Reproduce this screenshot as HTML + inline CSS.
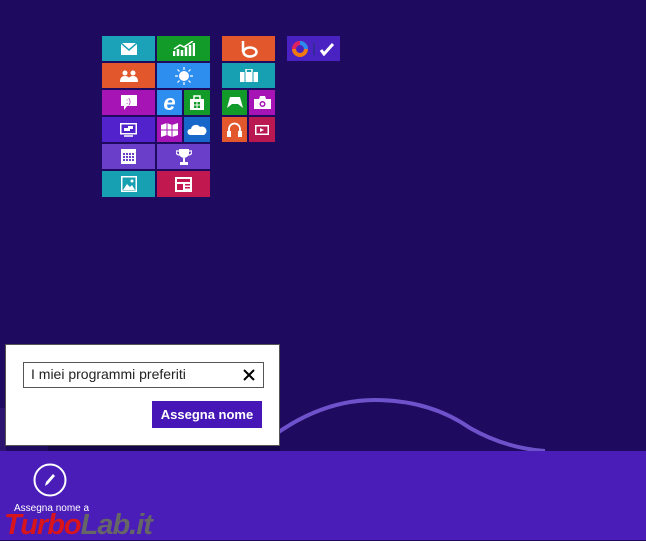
<!DOCTYPE html>
<html><head><meta charset="utf-8">
<style>
*{margin:0;padding:0;box-sizing:border-box}
body{width:646px;height:540px;overflow:hidden;background:#1e0a5e;font-family:"Liberation Sans",sans-serif;position:relative}
.t{position:absolute;display:flex;align-items:center;justify-content:center;color:#fff}
.t svg{display:block}
</style></head><body>
<!-- tiles -->
<div class="t" style="left:102px;top:36px;width:53px;height:25px;background:#1ba1b8"><svg width="16" height="12"><rect x="0" y="0" width="16" height="12" fill="#fff"/><path d="M0 0L8 7L16 0" stroke="#1ba1b8" stroke-width="1.5" fill="none"/></svg></div>
<div class="t" style="left:157px;top:36px;width:53px;height:25px;background:#139b2a"><svg width="22" height="16"><path d="M1 15V10M5 15V8M9 15V9M13 15V6M17 15V4M21 15V2" stroke="#fff" stroke-width="2.5"/><path d="M1 8L7 4L11 6L20 0" stroke="#fff" stroke-width="1.5" fill="none"/></svg></div>
<div class="t" style="left:222px;top:36px;width:53px;height:25px;background:#e2582c"><svg width="20" height="18"><path d="M4 1V12" stroke="#fff" stroke-width="2.5"/><ellipse cx="11" cy="12" rx="6.5" ry="4.5" stroke="#fff" stroke-width="2.5" fill="none"/></svg></div>
<div class="t" style="left:287px;top:36px;width:53px;height:25px;background:#4a22c2;gap:5px"><svg width="16" height="16"><circle cx="8" cy="8" r="6" stroke="#f07a10" stroke-width="4" fill="none"/><path d="M8 2A6 6 0 0 1 14 8" stroke="#2a8af0" stroke-width="4" fill="none"/><path d="M2 8A6 6 0 0 1 8 2" stroke="#e02060" stroke-width="4" fill="none"/></svg><svg width="22" height="14"><path d="M1 1V13" stroke="#203070" stroke-width="1"/><path d="M8 8L11 12L20 2" stroke="#fff" stroke-width="3" fill="none"/></svg></div>

<div class="t" style="left:102px;top:63px;width:53px;height:25px;background:#e2582c"><svg width="18" height="12"><circle cx="5" cy="3" r="2.5" fill="#fff"/><circle cx="13" cy="3" r="2.5" fill="#fff"/><path d="M0 12Q0 6 5 6Q10 6 10 12ZM8 12Q8 6 13 6Q18 6 18 12Z" fill="#fff"/></svg></div>
<div class="t" style="left:157px;top:63px;width:53px;height:25px;background:#2e8ef0"><svg width="18" height="18"><circle cx="9" cy="9" r="5" fill="#fff"/><g stroke="#fff" stroke-width="1.2"><path d="M9 0V3M9 15V18M0 9H3M15 9H18M2.5 2.5L4.5 4.5M13.5 13.5L15.5 15.5M2.5 15.5L4.5 13.5M13.5 4.5L15.5 2.5"/></g></svg></div>
<div class="t" style="left:222px;top:63px;width:53px;height:25px;background:#17a0b2"><svg width="18" height="13"><rect x="0" y="3" width="18" height="10" fill="#fff"/><rect x="6" y="0" width="6" height="4" stroke="#fff" stroke-width="1.5" fill="none"/><path d="M5 3V13M13 3V13" stroke="#17a0b2" stroke-width="1"/></svg></div>

<div class="t" style="left:102px;top:90px;width:53px;height:25px;background:#a614b5"><svg width="16" height="16"><path d="M0 0H16V11H6L3 15V11H0Z" fill="#fff"/><text x="5" y="9" font-size="8" fill="#a614b5" font-family="Liberation Sans">:)</text></svg></div>
<div class="t" style="left:157px;top:90px;width:25px;height:25px;background:#2e8ef0;font-size:22px;font-style:italic;font-weight:bold">e</div>
<div class="t" style="left:184px;top:90px;width:26px;height:25px;background:#139b2a"><svg width="14" height="15"><path d="M0 4H14V15H0Z" fill="#fff"/><path d="M4 4V1H10V4" stroke="#fff" fill="none" stroke-width="1.5"/><rect x="4" y="7" width="2.5" height="2.5" fill="#139b2a"/><rect x="7.5" y="7" width="2.5" height="2.5" fill="#139b2a"/><rect x="4" y="10.5" width="2.5" height="2.5" fill="#139b2a"/><rect x="7.5" y="10.5" width="2.5" height="2.5" fill="#139b2a"/></svg></div>
<div class="t" style="left:222px;top:90px;width:25px;height:25px;background:#139b2a"><svg width="16" height="11"><path d="M3 0H13L16 11L11 7H5L0 11Z" fill="#fff"/></svg></div>
<div class="t" style="left:249px;top:90px;width:26px;height:25px;background:#a614b5"><svg width="17" height="13"><path d="M0 3H5L6 0H11L12 3H17V13H0Z" fill="#fff"/><circle cx="8.5" cy="8" r="3" fill="#a614b5"/><circle cx="8.5" cy="8" r="1.5" fill="#fff"/></svg></div>

<div class="t" style="left:102px;top:117px;width:53px;height:25px;background:#5222cc"><svg width="17" height="14"><rect x="0.75" y="0.75" width="15.5" height="10" stroke="#fff" stroke-width="1.5" fill="none"/><rect x="4" y="5" width="6" height="3" fill="#fff"/><rect x="8" y="3" width="5" height="3" fill="#fff"/><path d="M4 13H13" stroke="#fff" stroke-width="1.5"/></svg></div>
<div class="t" style="left:157px;top:117px;width:25px;height:25px;background:#a614b5"><svg width="17" height="14"><path d="M0 2L6 0L11 2L17 0V12L11 14L6 12L0 14Z" fill="#fff"/><path d="M0 7H17M6 0V12M11 2V14" stroke="#a614b5" stroke-width="1"/></svg></div>
<div class="t" style="left:184px;top:117px;width:26px;height:25px;background:#1766c9"><svg width="20" height="11"><path d="M3 11A3 3 0 0 1 4 5A5 5 0 0 1 13 3A4 4 0 0 1 17 11Z" fill="#fff"/></svg></div>
<div class="t" style="left:222px;top:117px;width:25px;height:25px;background:#e2582c"><svg width="15" height="15"><path d="M2 10V7A5.5 5.5 0 0 1 13 7V10" stroke="#fff" stroke-width="1.8" fill="none"/><rect x="0" y="9" width="4" height="6" fill="#fff"/><rect x="11" y="9" width="4" height="6" fill="#fff"/></svg></div>
<div class="t" style="left:249px;top:117px;width:26px;height:25px;background:#ba1850"><svg width="14" height="10"><rect x="0.75" y="0.75" width="12.5" height="8.5" stroke="#fff" stroke-width="1.5" fill="none"/><path d="M5 3L9 5L5 7Z" fill="#fff"/></svg></div>

<div class="t" style="left:102px;top:144px;width:53px;height:25px;background:#6a3ec9"><svg width="15" height="15"><rect x="0" y="0" width="15" height="15" fill="#fff"/><g fill="#6a3ec9"><rect x="2" y="4" width="2" height="2"/><rect x="5" y="4" width="2" height="2"/><rect x="8" y="4" width="2" height="2"/><rect x="11" y="4" width="2" height="2"/><rect x="2" y="7" width="2" height="2"/><rect x="5" y="7" width="2" height="2"/><rect x="8" y="7" width="2" height="2"/><rect x="11" y="7" width="2" height="2"/><rect x="2" y="10" width="2" height="2"/><rect x="5" y="10" width="2" height="2"/><rect x="8" y="10" width="2" height="2"/><rect x="11" y="10" width="2" height="2"/></g></svg></div>
<div class="t" style="left:157px;top:144px;width:53px;height:25px;background:#6a3ec9"><svg width="16" height="16"><path d="M3 0H13V4A5 5 0 0 1 3 4Z" fill="#fff"/><path d="M3 2H0Q0 6 4 6M13 2H16Q16 6 12 6" stroke="#fff" stroke-width="1.2" fill="none"/><rect x="7" y="9" width="2" height="4" fill="#fff"/><rect x="4" y="13" width="8" height="3" fill="#fff"/></svg></div>

<div class="t" style="left:102px;top:171px;width:53px;height:26px;background:#17a0b2"><svg width="16" height="16"><rect x="0.75" y="0.75" width="14.5" height="14.5" stroke="#fff" stroke-width="1.5" fill="none"/><path d="M2 14L6 8L9 11L11 9L14 14Z" fill="#fff"/><circle cx="11" cy="5" r="1.5" fill="#fff"/></svg></div>
<div class="t" style="left:157px;top:171px;width:53px;height:26px;background:#c0184f"><svg width="17" height="15"><rect x="0" y="0" width="17" height="15" fill="#fff"/><rect x="2" y="2" width="13" height="3" fill="#c0184f"/><rect x="2" y="7" width="6" height="6" fill="#c0184f"/><rect x="10" y="7" width="5" height="1.5" fill="#c0184f"/><rect x="10" y="10" width="5" height="1.5" fill="#c0184f"/></svg></div>

<!-- wave & bottom bar -->
<svg style="position:absolute;left:0;top:380px" width="646" height="90"><path d="M250 75Q310 20 375 20Q430 20 470 48Q505 68 545 71" stroke="#6e52cc" stroke-width="4" fill="none"/></svg>
<div style="position:absolute;left:0;top:408px;width:6px;height:43px;background:#2c1470"></div>
<div style="position:absolute;left:0;top:451px;width:646px;height:89px;background:#4a1db9"></div>
<div style="position:absolute;left:48px;top:446px;width:232px;height:5px;background:#15064a"></div>

<!-- dialog -->
<div style="position:absolute;left:5px;top:344px;width:275px;height:102px;background:#fff;border:1px solid #555"></div>
<div style="position:absolute;left:23px;top:362px;width:241px;height:26px;border:1.5px solid #555;background:#fff;font-size:14px;color:#222;line-height:23px;padding-left:7px">I miei programmi preferiti<svg style="position:absolute;right:8px;top:6px" width="12" height="12"><path d="M1 1L11 11M11 1L1 11" stroke="#000" stroke-width="2"/></svg></div>
<div style="position:absolute;left:152px;top:401px;width:110px;height:27px;background:#4617b6;color:#fff;font-size:13px;font-weight:bold;text-align:center;line-height:27px">Assegna nome</div>

<!-- app bar button -->
<svg style="position:absolute;left:33px;top:463px" width="34" height="34"><circle cx="17" cy="17" r="15.5" stroke="#fff" stroke-width="2" fill="none"/><path d="M12 23L13 19L20 11L22 13L15 21Z" fill="#fff"/></svg>
<div style="position:absolute;left:14px;top:503px;font-size:10px;color:#fff">Assegna nome a</div>
<div style="position:absolute;left:4px;top:509px;font-size:29px;font-weight:bold;font-style:italic;color:#d8141c;letter-spacing:-1px;line-height:32px">Turbo<span style="color:#666">Lab.it</span></div>
</body></html>
